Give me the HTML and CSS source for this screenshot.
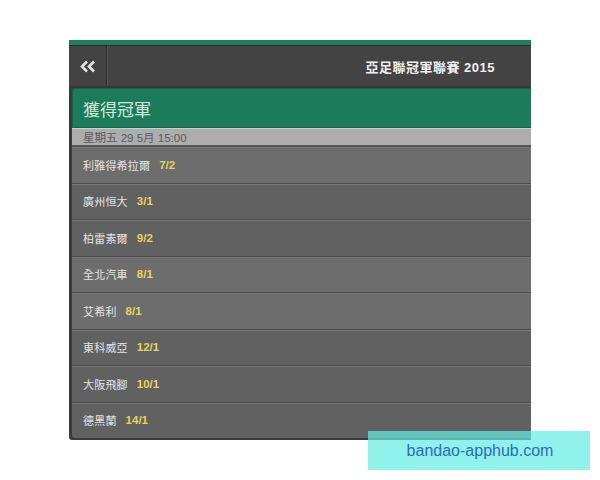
FILE: index.html
```html
<!DOCTYPE html>
<html lang="zh-Hant">
<head>
<meta charset="utf-8">
<title>亞足聯冠軍聯賽 2015</title>
<link rel="stylesheet" href="styles.css">
</head>
<body>
<div class="screen">
  <div class="topstrip"></div>
  <div class="header">
    <div class="back">
      <svg width="18" height="13" viewBox="0 0 18 13">
        <path d="M8 1.5 L3 6.5 L8 11.5 M15 1.5 L10 6.5 L15 11.5" fill="none" stroke="#e2e2e2" stroke-width="2.6" stroke-linejoin="miter" stroke-linecap="butt"/>
      </svg>
    </div>
    <div class="title">亞足聯冠軍聯賽 2015</div>
  </div>
  <div class="panel">
    <div class="section">獲得冠軍</div>
    <div class="date">星期五 29 5月 15:00</div>
    <div class="row light"><span class="name">利雅得希拉爾</span><span class="odds">7/2</span></div>
    <div class="row dark"><span class="name">廣州恒大</span><span class="odds">3/1</span></div>
    <div class="row dark"><span class="name">柏雷素爾</span><span class="odds">9/2</span></div>
    <div class="row light"><span class="name">全北汽車</span><span class="odds">8/1</span></div>
    <div class="row light"><span class="name">艾希利</span><span class="odds">8/1</span></div>
    <div class="row dark"><span class="name">東科威亞</span><span class="odds">12/1</span></div>
    <div class="row dark"><span class="name">大阪飛腳</span><span class="odds">10/1</span></div>
    <div class="row dark last"><span class="name">德黑蘭</span><span class="odds">14/1</span></div>
  </div>
</div>
<div class="watermark">bandao-apphub.com</div>
</body>
</html>
```

FILE: styles.css
```css
html, body {
  margin: 0;
  padding: 0;
  background: #ffffff;
  width: 600px;
  height: 480px;
  overflow: hidden;
  font-family: "Liberation Sans", "Noto Sans CJK TC", sans-serif;
}

.screen {
  margin: 40px 0 0 69px;
  width: 462px;
  height: 400px;
  background: #3b3b3b;
  border-bottom-left-radius: 3px;
  overflow: hidden;
}

.topstrip {
  height: 5px;
  background: #1f7e5c;
  border-bottom: 1px solid #2c2c2c;
}

.header {
  height: 40px;
  background: #434343;
  display: flex;
  align-items: center;
  border-bottom: 2px solid #383838;
}

.back {
  width: 38px;
  height: 100%;
  border-right: 1px solid #2d2d2d;
  box-shadow: 1px 0 0 #555;
  display: flex;
  align-items: center;
  justify-content: center;
  padding-left: 1px;
  box-sizing: border-box;
}

.back svg {
  display: block;
}

.title {
  flex: 1;
  text-align: right;
  padding-right: 36px;
  color: #f0f0f0;
  font-weight: bold;
  font-size: 13px;
  letter-spacing: 0.5px;
}

.panel {
  margin-left: 3px;
  background: #3b3b3b;
}

.section {
  height: 40px;
  box-sizing: border-box;
  background: #1b7b5a;
  border: 1px solid #14624a;
  border-right: none;
  border-top-left-radius: 3px;
  color: #d6e6de;
  font-size: 17px;
  padding-left: 10px;
  display: flex;
  align-items: center;
}

.date {
  height: 18px;
  box-sizing: border-box;
  background: #adadad;
  border-top: 1px solid #c4d4cc;
  border-bottom: 1px solid #5a5a5a;
  color: #5a5a5a;
  font-size: 11.5px;
  padding-left: 11px;
  display: flex;
  align-items: center;
}

.row {
  height: 36.5px;
  box-sizing: border-box;
  display: flex;
  align-items: center;
  padding-left: 11px;
  border-top: 1px solid #4e4e4e;
  box-shadow: inset 0 1px 0 #767676;
}

.row:first-of-type {
  border-top: none;
}

.row.light {
  background: #6d6d6d;
}

.row.dark {
  background: #616161;
}

.row.last {
  border-bottom-left-radius: 3px;
}

.name {
  color: #e4e4e4;
  font-size: 11px;
  letter-spacing: 0.2px;
}

.odds {
  color: #e6d45a;
  margin-left: 9px;
  font-size: 11.5px;
  font-weight: bold;
}

.watermark {
  position: absolute;
  left: 368px;
  top: 431px;
  width: 222px;
  height: 39px;
  background: rgba(98, 236, 228, 0.7);
  color: #2c6cb6;
  font-size: 16px;
  display: flex;
  align-items: center;
  justify-content: center;
  padding-left: 2px;
  box-sizing: border-box;
}
```
